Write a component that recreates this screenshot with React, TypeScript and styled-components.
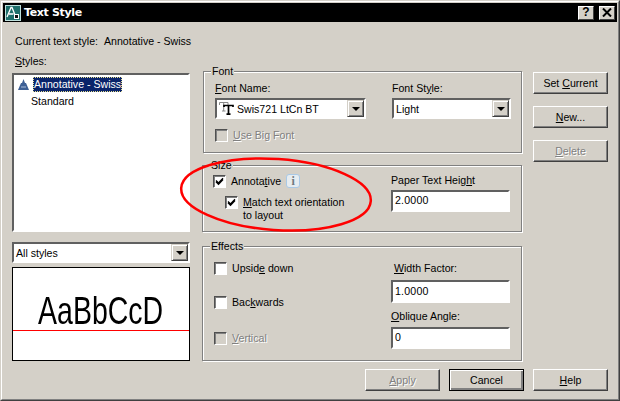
import React from "react";
import styled, { createGlobalStyle, css } from "styled-components";

const Global = createGlobalStyle`
  html, body { margin: 0; padding: 0; background: #d4d0c8; }
  * { box-sizing: border-box; }
  body { font-family: "Liberation Sans", Arial, sans-serif; font-size: 10.6px; color: #000; }
  u { text-decoration: underline; text-underline-offset: 1px; }
`;

const Window = styled.div`
  position: relative;
  width: 620px;
  height: 401px;
  border: 1px solid;
  border-color: #d4d0c8 #404040 #404040 #d4d0c8;
  overflow: hidden;
`;
const Frame = styled.div`
  width: 100%;
  height: 100%;
  border: 1px solid;
  border-color: #ffffff #808080 #808080 #ffffff;
  padding: 1px;
  background: #d4d0c8;
`;
const TitleBar = styled.div`
  height: 19px;
  background: #000;
  display: flex;
  align-items: center;
  padding: 0 2px 0 2px;
  gap: 3px;
`;
const TitleText = styled.span`
  color: #fff;
  font-family: "DejaVu Sans", sans-serif;
  font-weight: 700;
  font-size: 11px;
  flex: 1;
  letter-spacing: -0.35px;
`;
const Caption = styled.button`
  width: 16px;
  height: 14px;
  padding: 0;
  margin-left: 2px;
  background: #d4d0c8;
  border: 1px solid;
  border-color: #fff #404040 #404040 #fff;
  font: 700 12px "Liberation Sans", sans-serif;
  line-height: 11px;
  color: #000;
  display: flex;
  align-items: center;
  justify-content: center;
`;
const Body = styled.div`
  padding: 13px 0 0 9px;
`;
const CurrentLine = styled.div`
  display: flex;
  gap: 6px;
  height: 13px;
  line-height: 13px;
  padding-left: 3px;
`;
const MainRow = styled.div`
  display: flex;
  margin-top: 7px;
`;
const LeftColumn = styled.div`
  width: 178px;
  display: flex;
  flex-direction: column;
`;
const StylesLabel = styled.label`
  height: 13px;
  line-height: 13px;
  padding-left: 3px;
  margin-bottom: 5px;
`;
const sunken = css`
  border: 2px solid;
  border-color: #606060 #ffffff #ffffff #606060;
  background: #fff;
`;
const StyleList = styled.div`
  ${sunken};
  height: 159px;
  padding: 1px 1px;
`;
const StyleRow = styled.div`
  display: flex;
  align-items: center;
  height: 17px;
  padding-left: 3px;
  gap: 4px;
`;
const StyleName = styled.span<{ $selected?: boolean }>`
  padding: 1px 1px;
  line-height: 13px;
  height: 15px;
  margin-left: ${(p) => (p.$selected ? 0 : "12px")};
  ${(p) =>
    p.$selected &&
    css`
      background: #0a246a;
      color: #fff;
      outline: 1px dotted #e8e090;
      outline-offset: -1px;
    `}
`;
const Combo = styled.div<{ $w: number }>`
  ${sunken};
  width: ${(p) => p.$w}px;
  height: 21px;
  display: flex;
  align-items: center;
`;
const ComboValue = styled.span`
  flex: 1;
  display: flex;
  align-items: center;
  gap: 3px;
  padding-left: 2px;
  white-space: nowrap;
`;
const ComboButton = styled.span`
  width: 17px;
  height: 17px;
  background: #d4d0c8;
  border: 1px solid;
  border-color: #d4d0c8 #404040 #404040 #d4d0c8;
  box-shadow: inset 1px 1px 0 #fff, inset -1px -1px 0 #808080;
  display: flex;
  align-items: center;
  justify-content: center;
  &::after {
    content: "";
    border-left: 4px solid transparent;
    border-right: 4px solid transparent;
    border-top: 4px solid #000;
  }
`;
const FilterCombo = styled(Combo)`
  margin-top: 10px;
`;
const Preview = styled.div`
  position: relative;
  height: 94px;
  margin-top: 4px;
  background: #fff;
  border: 1px solid #000;
  overflow: hidden;
  display: flex;
  justify-content: center;
`;
const PreviewText = styled.span`
  font-size: 39px;
  line-height: 45px;
  margin-top: 20px;
  transform: scaleX(0.73);
  white-space: nowrap;
  color: #000;
`;
const Baseline = styled.div`
  position: absolute;
  left: 0;
  right: 0;
  top: 62px;
  height: 1px;
  background: #f00;
`;
const MiddleColumn = styled.div`
  width: 320px;
  margin-left: 12px;
  padding-top: 16px;
  display: flex;
  flex-direction: column;
`;
const Group = styled.div<{ $h: number; $mt?: number; $ml?: number; $pt: number }>`
  position: relative;
  height: ${(p) => p.$h}px;
  margin-top: ${(p) => p.$mt ?? 0}px;
  margin-left: ${(p) => p.$ml ?? 0}px;
  padding: ${(p) => p.$pt}px 10px 0 11px;
  border: 1px solid #808080;
  box-shadow: 1px 1px 0 #fff, inset 1px 1px 0 #fff;
  display: flex;
`;
const Legend = styled.span`
  position: absolute;
  left: 7px;
  top: -7px;
  padding: 0 1px;
  line-height: 13px;
  background: #d4d0c8;
`;
const GroupLeft = styled.div`
  width: 177px;
  display: flex;
  flex-direction: column;
`;
const GroupRight = styled.div`
  width: 119px;
  display: flex;
  flex-direction: column;
`;
const FieldLabel = styled.label<{ $ml?: number; $mt?: number; $mb?: number }>`
  height: 13px;
  line-height: 13px;
  margin-left: ${(p) => p.$ml ?? 0}px;
  margin-top: ${(p) => p.$mt ?? 0}px;
  margin-bottom: ${(p) => p.$mb ?? 3}px;
`;
const TextBox = styled.div<{ $h: number }>`
  ${sunken};
  height: ${(p) => p.$h}px;
  line-height: ${(p) => p.$h - 5}px;
  padding-left: 2px;
  letter-spacing: 0.2px;
`;
const CheckRow = styled.div<{ $mt?: number; $ml?: number }>`
  display: flex;
  align-items: flex-start;
  gap: 5px;
  margin-top: ${(p) => p.$mt ?? 0}px;
  margin-left: ${(p) => p.$ml ?? 0}px;
`;
const Box = styled.span<{ $disabled?: boolean }>`
  width: 13px;
  height: 13px;
  flex: none;
  border: 1px solid;
  border-color: #505050 #ffffff #ffffff #505050;
  box-shadow: inset 1px 1px 0 #808080;
  background: ${(p) => (p.$disabled ? "#d4d0c8" : "#fff")};
  display: flex;
  align-items: center;
  justify-content: center;
`;
const CheckText = styled.span<{ $disabled?: boolean }>`
  line-height: 13px;
  ${(p) =>
    p.$disabled &&
    css`
      color: #808080;
      text-shadow: 1px 1px 0 #fff;
    `}
`;
const InfoBadge = styled.span`
  width: 14px;
  height: 14px;
  margin-top: -1px;
  border: 1px solid #a9c9e6;
  border-radius: 3px;
  background: #e6ecf0;
  color: #707a80;
  font: 700 12px "Liberation Serif", serif;
  line-height: 12px;
  text-align: center;
`;
const RightColumn = styled.div`
  width: 75px;
  margin-left: 11px;
  padding-top: 17px;
  display: flex;
  flex-direction: column;
  gap: 12px;
`;
const Button = styled.button<{ $default?: boolean; $disabled?: boolean }>`
  width: 75px;
  height: 22px;
  padding: 0;
  background: #d4d0c8;
  border: 1px solid;
  border-color: #fff #404040 #404040 #fff;
  box-shadow: inset -1px -1px 0 #808080;
  font: 10.6px "Liberation Sans", sans-serif;
  color: #000;
  ${(p) =>
    p.$default &&
    css`
      outline: 1px solid #000;
      outline-offset: -1px;
      box-shadow: inset 1px 1px 0 #fff, inset -2px -2px 0 #808080;
    `}
  ${(p) =>
    p.$disabled &&
    css`
      color: #808080;
      text-shadow: 1px 1px 0 #fff;
    `}
`;
const Footer = styled.div`
  position: absolute;
  left: 364px;
  top: 368px;
  display: flex;
  gap: 9px;
`;
const Ellipse = styled.svg`
  position: absolute;
  left: -1px;
  top: -1px;
  pointer-events: none;
`;

const Check = () => (
  <svg width="9" height="9" viewBox="0 0 9 9">
    <path d="M1 3.5 L3.5 6 L8 1.2 M1 4.8 L3.5 7.4 L8 2.5" fill="none" stroke="#000" strokeWidth="1.3" />
  </svg>
);

const AppIcon = () => (
  <svg width="16" height="16" viewBox="0 0 16 16">
    <rect width="16" height="16" fill="#1f6f6a" />
    <rect x="0.5" y="0.5" width="15" height="15" fill="none" stroke="#bfe0dc" />
    <path d="M2 12 L6 2.5 L7 2.5 L10 10 M4 9 H8.5" fill="none" stroke="#fff" strokeWidth="1.3" />
    <rect x="9.5" y="9.5" width="4" height="4" fill="#111" stroke="#fff" />
  </svg>
);

const AnnotIcon = () => (
  <svg width="11" height="12" viewBox="0 0 11 12">
    <path d="M5.5 0 L7 4 L8 4 L11 11 L0 11 L3 4 L4 4 Z" fill="#3d5f95" />
    <path d="M3 8 H8" stroke="#a8bcd8" strokeWidth="1" />
  </svg>
);

const TtIcon = () => (
  <svg width="15" height="13" viewBox="0 0 15 13">
    <path d="M0.5 3 V0.5 H9 V3 M4.7 0.5 V9 M3 9 H6.5" fill="none" stroke="#888" strokeWidth="1" />
    <path d="M5 5 V3.5 H14 V5 M9.5 3.5 V12 M7.5 12.2 H11.5" fill="none" stroke="#000" strokeWidth="1.7" />
  </svg>
);

const CloseGlyph = () => (
  <svg width="10" height="9" viewBox="0 0 10 9">
    <path d="M1 0.5 L9 8.5 M9 0.5 L1 8.5" stroke="#000" strokeWidth="2" />
  </svg>
);

export default function App() {
  return (
    <>
      <Global />
      <Window>
        <Frame>
          <TitleBar>
            <AppIcon />
            <TitleText>Text Style</TitleText>
            <Caption>?</Caption>
            <Caption aria-label="Close"><CloseGlyph /></Caption>
          </TitleBar>
          <Body>
            <CurrentLine>
              <span>Current text style:</span>
              <span>Annotative - Swiss</span>
            </CurrentLine>
            <MainRow>
              <LeftColumn>
                <StylesLabel><u>S</u>tyles:</StylesLabel>
                <StyleList>
                  <StyleRow>
                    <AnnotIcon />
                    <StyleName $selected>Annotative - Swiss</StyleName>
                  </StyleRow>
                  <StyleRow>
                    <StyleName>Standard</StyleName>
                  </StyleRow>
                </StyleList>
                <FilterCombo $w={178}>
                  <ComboValue>All styles</ComboValue>
                  <ComboButton />
                </FilterCombo>
                <Preview>
                  <PreviewText>AaBbCcD</PreviewText>
                  <Baseline />
                </Preview>
              </LeftColumn>
              <MiddleColumn>
                <Group $h={82} $ml={1} $pt={10}>
                  <Legend>Font</Legend>
                  <GroupLeft>
                    <FieldLabel><u>F</u>ont Name:</FieldLabel>
                    <Combo $w={151}>
                      <ComboValue><TtIcon />Swis721 LtCn BT</ComboValue>
                      <ComboButton />
                    </Combo>
                    <CheckRow $mt={10}>
                      <Box $disabled />
                      <CheckText $disabled><u>U</u>se Big Font</CheckText>
                    </CheckRow>
                  </GroupLeft>
                  <GroupRight>
                    <FieldLabel>Font St<u>y</u>le:</FieldLabel>
                    <Combo $w={119}>
                      <ComboValue>Light</ComboValue>
                      <ComboButton />
                    </Combo>
                  </GroupRight>
                </Group>
                <Group $h={67} $mt={12} $pt={9}>
                  <Legend>Size</Legend>
                  <GroupLeft>
                    <CheckRow $ml={-1}>
                      <Box><Check /></Box>
                      <CheckText>Annota<u>t</u>ive</CheckText>
                      <InfoBadge>i</InfoBadge>
                    </CheckRow>
                    <CheckRow $mt={8} $ml={11}>
                      <Box><Check /></Box>
                      <CheckText><u>M</u>atch text orientation<br />to layout</CheckText>
                    </CheckRow>
                  </GroupLeft>
                  <GroupRight>
                    <FieldLabel $mt={-1}>Paper Text Heig<u>h</u>t</FieldLabel>
                    <TextBox $h={22}>2.0000</TextBox>
                  </GroupRight>
                </Group>
                <Group $h={115} $mt={14} $pt={15}>
                  <Legend>Effects</Legend>
                  <GroupLeft>
                    <CheckRow><Box /><CheckText>Upsid<u>e</u> down</CheckText></CheckRow>
                    <CheckRow $mt={21}><Box /><CheckText>Bac<u>k</u>wards</CheckText></CheckRow>
                    <CheckRow $mt={23}><Box $disabled /><CheckText $disabled><u>V</u>ertical</CheckText></CheckRow>
                  </GroupLeft>
                  <GroupRight>
                    <FieldLabel $ml={3} $mb={5}><u>W</u>idth Factor:</FieldLabel>
                    <TextBox $h={23}>1.0000</TextBox>
                    <FieldLabel $mt={7} $mb={4}><u>O</u>blique Angle:</FieldLabel>
                    <TextBox $h={22}>0</TextBox>
                  </GroupRight>
                </Group>
              </MiddleColumn>
              <RightColumn>
                <Button>Set <u>C</u>urrent</Button>
                <Button><u>N</u>ew...</Button>
                <Button $disabled><u>D</u>elete</Button>
              </RightColumn>
            </MainRow>
          </Body>
          <Footer>
            <Button $disabled><u>A</u>pply</Button>
            <Button $default>Cancel</Button>
            <Button><u>H</u>elp</Button>
          </Footer>
          <Ellipse width="620" height="401">
            <ellipse cx="276" cy="194.5" rx="95" ry="35.5" transform="rotate(4 276 194.5)" fill="none" stroke="#f00" strokeWidth="2.5" />
          </Ellipse>
        </Frame>
      </Window>
    </>
  );
}
